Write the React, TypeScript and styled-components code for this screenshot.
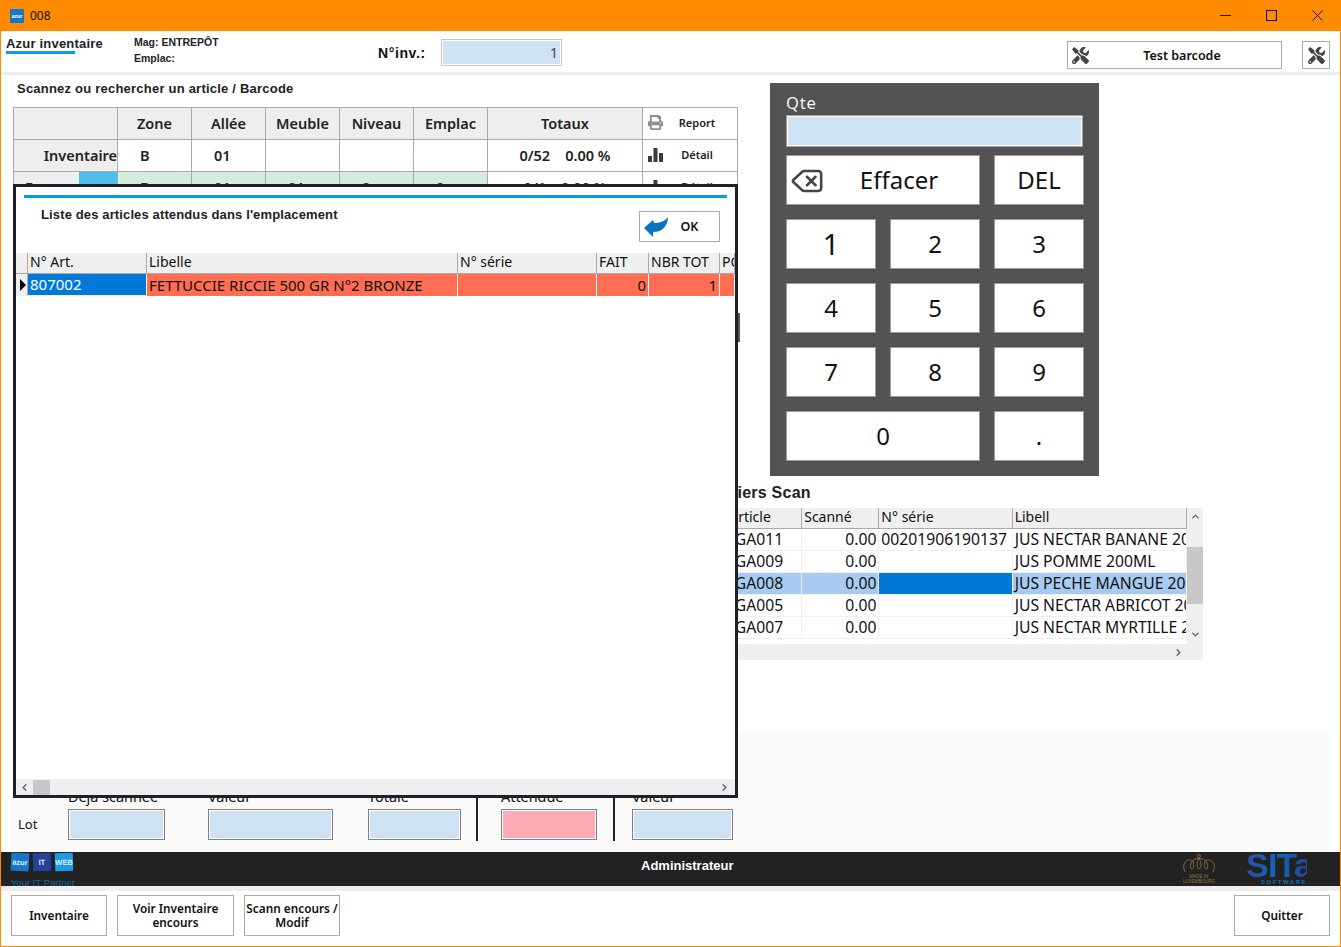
import styled, { createGlobalStyle } from 'styled-components'
import { ChevronDown, ChevronLeft, ChevronRight, ChevronUp, Delete } from 'lucide-react'
import { FaPrint, FaTools } from 'react-icons/fa'

const UI_FONT = `"Noto Sans", "Open Sans", sans-serif`
const LABEL_FONT = `"Liberation Sans", Arial, sans-serif`

const GlobalStyle = createGlobalStyle`
    html, body {
        margin: 0;
        padding: 0;
        background: #fff;
    }
    * {
        box-sizing: border-box;
    }
`

const Window = styled.div`
    width: 1341px;
    height: 947px;
    display: flex;
    flex-direction: column;
    border: 1px solid #ff8c00;
    border-top: none;
    background: #fff;
    overflow: hidden;
    font-family: ${UI_FONT};
    color: #111;
`

const TitleBar = styled.div`
    height: 31px;
    flex: none;
    margin: 0 -1px;
    padding-left: 10px;
    display: flex;
    align-items: center;
    gap: 6px;
    background: #ff8c00;
    font-size: 12px;
`

const AppIcon = styled.div`
    width: 14px;
    height: 14px;
    background: #1677c9;
    color: #fff;
    font-size: 5px;
    font-weight: 700;
    display: flex;
    align-items: center;
    justify-content: center;
`

const WindowControls = styled.div`
    margin: 0 1px 0 auto;
    display: flex;
`

const WindowControl = styled.div`
    width: 46px;
    height: 31px;
    display: flex;
    align-items: center;
    justify-content: center;
`

const Header = styled.div`
    height: 44px;
    flex: none;
    border-bottom: 3px solid #eee;
    display: flex;
    align-items: flex-start;
`

const Brand = styled.div`
    margin: 6px 0 0 5px;
    width: 128px;
    font-family: ${LABEL_FONT};
    font-size: 13px;
    font-weight: 700;
    line-height: 14px;
    color: #222;
    letter-spacing: 0.2px;

    &::after {
        content: '';
        display: block;
        width: 69px;
        height: 3px;
        background: #0a9be4;
    }
`

const Location = styled.div`
    margin-top: 3px;
    width: 244px;
    font-family: ${LABEL_FONT};
    font-size: 10.5px;
    line-height: 16px;
    font-weight: 700;
    color: #222;
`

const InvLabel = styled.div`
    margin-top: 13px;
    width: 63px;
    font-family: ${LABEL_FONT};
    font-size: 14px;
    line-height: 18px;
    font-weight: 700;
    letter-spacing: 0.6px;
`

const InvInput = styled.div`
    margin-top: 8px;
    width: 121px;
    height: 27px;
    padding-right: 3px;
    display: flex;
    align-items: center;
    justify-content: flex-end;
    background: #cfe2f3;
    border: 1px solid #c8c8c8;
    box-shadow: inset 0 0 0 1px #fff;
    font-size: 14px;
    color: #444;
`

const TestButton = styled.div`
    margin: 10px 0 0 505px;
    width: 215px;
    height: 28px;
    padding: 0 4px;
    display: flex;
    align-items: center;
    border: 1px solid #aaa;
    font-size: 12.5px;
    font-weight: 600;
`

const TestLabel = styled.span`
    flex: 1;
    text-align: center;
    padding-right: 2px;
`

const ToolButton = styled.div`
    margin: 10px 0 0 20px;
    width: 28px;
    height: 28px;
    display: flex;
    align-items: center;
    justify-content: center;
    border: 1px solid #aaa;
`

const Body = styled.div`
    position: relative;
    height: 777px;
    flex: none;
    display: flex;
    flex-direction: column;
`

const Upper = styled.div`
    height: 656px;
    flex: none;
    display: flex;
`

const LeftColumn = styled.div`
    width: 737px;
    flex: none;
    padding: 6px 0 0 12px;
`

const PageTitle = styled.div`
    height: 26px;
    padding: 0 0 0 4px;
    font-family: ${LABEL_FONT};
    font-size: 13px;
    line-height: 16px;
    font-weight: 700;
    color: #222;
    letter-spacing: 0.22px;
`

const SummaryTable = styled.table`
    width: 724px;
    border-collapse: collapse;
    table-layout: fixed;
    font-size: 14.5px;
    font-weight: 600;
    color: #222;

    td {
        height: 32px;
        padding: 0 0 2px;
        border: 1px solid #aaa;
        white-space: nowrap;
        overflow: hidden;
    }
`

const HeadCell = styled.td`
    background: #eee;
    text-align: center;
`

const RowLabel = styled.td`
    background: #eee;
    text-align: right;
`

const SplitCell = styled.td`
    background: #eee;
    padding: 0 !important;
`

const SplitLabel = styled.div`
    height: 31px;
    padding-bottom: 0;
    display: flex;
    align-items: center;
    background: #eee;
`

const SplitText = styled.span`
    width: 65px;
    padding: 0 0 2px 11px;
    overflow: hidden;
`

const Swatch = styled.span`
    flex: 1;
    align-self: stretch;
    background: #4fbde9;
`

const ValueCell = styled.td<{ $done?: boolean }>`
    padding-left: 22px !important;
    background: ${(p) => (p.$done ? '#d5ebdd' : '#fff')};
`

const TotalCell = styled.td`
    text-align: center;
`

const ActionCell = styled.td`
    font-size: 11px;
`

const ActionInner = styled.div`
    padding: 0 0 0 5px;
    display: flex;
    align-items: center;
`

const ActionText = styled.span`
    flex: 1;
    text-align: center;
    padding-right: 6px;
`

const RightColumn = styled.div`
    flex: 1;
    padding: 8px 0 0 32px;
`

const Keypad = styled.div`
    width: 329px;
    height: 393px;
    padding: 9px 15px 0 16px;
    background: #535353;
`

const KeypadLabel = styled.div`
    height: 23px;
    font-size: 16.5px;
    line-height: 22px;
    letter-spacing: 0.8px;
    color: #f4f4f4;
`

const KeypadInput = styled.div`
    height: 32px;
    margin: 0 1px 8px 0;
    background: #cfe2f3;
    border: 1px solid #a0a0a0;
    box-shadow: inset 0 0 0 1px #fff;
`

const KeypadGrid = styled.div`
    display: grid;
    grid-template-columns: repeat(3, 90px);
    grid-auto-rows: 50px;
    gap: 14px;
`

const Key = styled.div<{ $wide?: boolean; $big?: boolean; $offset?: number }>`
    position: relative;
    grid-column: ${(p) => (p.$wide ? 'span 2' : 'auto')};
    padding: 0 0 2px ${(p) => p.$offset || 0}px;
    display: flex;
    align-items: center;
    justify-content: center;
    background: #fff;
    border: 1px solid #9a9a9a;
    font-size: ${(p) => (p.$big ? '29px' : '24px')};
    color: #111;
`

const KeyIcon = styled.span`
    position: absolute;
    left: 3px;
    top: 8px;
    display: flex;
    color: #444;
`

const ScanSection = styled.div`
    width: 503px;
    margin: 7px 0 0 -70px;
`

const ScanTitle = styled.div`
    height: 25px;
    font-family: ${LABEL_FONT};
    font-size: 16px;
    line-height: 19px;
    font-weight: 700;
    color: #222;
    letter-spacing: 0.25px;
`

const DataTable = styled.table`
    align-self: start;
    border-collapse: separate;
    border-spacing: 0;
    table-layout: fixed;
    width: 100%;
    font-size: 15px;

    th {
        height: 21px;
        padding: 0 2px 2px;
        text-align: left;
        font-weight: 400;
        font-size: 14px;
        line-height: 18px;
        background: #efefef;
        border-right: 1px solid #aaa;
        border-bottom: 1px solid #aaa;
        white-space: nowrap;
        overflow: hidden;
    }

    td {
        height: 22px;
        padding: 0 2px 1px;
        line-height: 20px;
        border-right: 1px solid #f0f0f0;
        border-bottom: 1px solid #f0f0f0;
        white-space: nowrap;
        overflow: hidden;
    }
`

const ScanFrame = styled.div`
    height: 152px;
    display: grid;
    grid-template-columns: 1fr 16px;
    grid-template-rows: 136px 16px;
    background: #fff;

    && td {
        font-size: 15.7px;
    }
`

const ArticleHead = styled.th`
    padding-left: 10px !important;
`

const CodeCell = styled.td<{ $selected?: boolean }>`
    padding-right: 18px !important;
    text-align: right;
    background: ${(p) => (p.$selected ? '#a6caf0' : 'transparent')};
`

const NumberCell = styled.td`
    text-align: right;
`

const SelectedCell = styled.td<{ $align?: string }>`
    background: #a6caf0;
    text-align: ${(p) => p.$align || 'left'};
`

const CurrentCell = styled.td`
    background: #0078d7;
    color: #fff;
`

const DangerCell = styled.td<{ $align?: string }>`
    background: #ff6e52;
    border-right-color: #fff !important;
    border-bottom: none !important;
    text-align: ${(p) => p.$align || 'left'};
`

const RowHeaderCell = styled.td`
    background: #f0f0f0;
    padding: 0 !important;
    border-right: 1px solid #aaa !important;
`

const RowPointer = styled.div`
    width: 0;
    height: 0;
    margin-left: 4px;
    border-left: 6px solid #000;
    border-top: 6px solid transparent;
    border-bottom: 6px solid transparent;
`

const VerticalScroll = styled.div`
    position: relative;
    background: #efefef;
    display: flex;
    flex-direction: column;
    align-items: center;
    justify-content: space-between;
    padding: 3px 0 4px;
    color: #606060;
`

const ScrollThumbV = styled.div`
    position: absolute;
    left: 0;
    right: 0;
    top: 39px;
    height: 57px;
    background: #c8c8c8;
`

const HorizontalScroll = styled.div<{ $span?: boolean }>`
    height: 16px;
    flex: none;
    grid-column: ${(p) => (p.$span ? '1 / span 2' : 'auto')};
    display: flex;
    align-items: center;
    justify-content: space-between;
    padding: 0 5px 0 3px;
    background: #efefef;
    color: #606060;
`

const ScrollThumbH = styled.div`
    width: 17px;
    height: 15px;
    margin: 0 auto 0 3px;
    background: #c8c8c8;
`

const ScrollEndArrow = styled.span`
    display: flex;
    margin: 0 14px 0 auto;
`

const StatsPanel = styled.div`
    height: 121px;
    flex: none;
    margin: 0 11px;
    padding: 0 0 12px 6px;
    display: flex;
    align-items: flex-end;
    background: #fafafa;
`

const LotLabel = styled.div`
    width: 50px;
    height: 31px;
    padding-bottom: 2px;
    display: flex;
    align-items: center;
    font-size: 13px;
`

const LotField = styled.div<{ $width: number; $gap: number }>`
    width: ${(p) => p.$width}px;
    margin-left: ${(p) => p.$gap}px;
    flex: none;
`

const LotCaption = styled.div`
    height: 20px;
    font-size: 14.4px;
    line-height: 16px;
    white-space: nowrap;
`

const LotInput = styled.div<{ $alert?: boolean }>`
    height: 31px;
    background: ${(p) => (p.$alert ? '#ffabb5' : '#cfe2f3')};
    border: 1px solid #808080;
    box-shadow: inset 0 0 0 1px #fff;
`

const LotDivider = styled.div<{ $gap: number }>`
    width: 2px;
    height: 50px;
    margin: 0 0 -1px ${(p) => p.$gap}px;
    flex: none;
    background: #222;
`

const Modal = styled.div`
    position: absolute;
    left: 12px;
    top: 109px;
    width: 725px;
    height: 614px;
    z-index: 5;
    display: flex;
    flex-direction: column;
    background: #fff;
    border: 3px solid #20202a;

    &::after {
        content: '';
        position: absolute;
        right: -5px;
        top: 126px;
        width: 2px;
        height: 29px;
        background: #555;
    }
`

const ModalRule = styled.div`
    height: 3px;
    flex: none;
    margin: 8px 8px 0;
    background: #009fe3;
`

const ModalHeader = styled.div`
    height: 31px;
    flex: none;
    margin-top: 13px;
    padding: 0 15px 0 25px;
    display: flex;
    justify-content: space-between;
`

const ModalTitle = styled.div`
    font-family: ${LABEL_FONT};
    font-size: 13px;
    line-height: 8px;
    font-weight: 700;
    color: #222;
    letter-spacing: 0.13px;
`

const OkButton = styled.div`
    width: 81px;
    height: 31px;
    padding-left: 4px;
    display: flex;
    align-items: center;
    border: 1px solid #aaa;
    font-size: 12.5px;
    font-weight: 600;
`

const OkLabel = styled.span`
    flex: 1;
    text-align: center;
    padding-right: 8px;
`

const ModalGrid = styled.div`
    flex: 1;
    margin-top: 11px;
    overflow: hidden;

    && td {
        height: 21px;
    }
`

const StatusBand = styled.div`
    height: 34px;
    flex: none;
    display: grid;
    grid-template-columns: 640px auto 1fr;
    background: #222;
    overflow: hidden;
`

const LogoBlock = styled.div`
    padding: 1px 0 0 10px;
`

const LogoRow = styled.div`
    display: flex;
    gap: 4px;
`

const LogoTile = styled.div<{ $color: string; $tilt: number }>`
    width: 18px;
    height: 18px;
    display: flex;
    align-items: center;
    justify-content: center;
    background: ${(p) => p.$color};
    transform: rotate(${(p) => p.$tilt}deg);
    font-family: ${LABEL_FONT};
    font-size: 7.5px;
    font-weight: 700;
    color: #dfeffa;
`

const LogoTagline = styled.div`
    margin-top: 7px;
    font-family: ${LABEL_FONT};
    font-size: 9.5px;
    line-height: 10px;
    color: #0d6a9f;
    white-space: nowrap;
`

const UserName = styled.div`
    padding-top: 6px;
    font-family: ${LABEL_FONT};
    font-size: 13px;
    line-height: 16px;
    font-weight: 700;
    color: #fff;
`

const Marks = styled.div`
    display: flex;
    justify-content: flex-end;
    padding-right: 33px;
    gap: 30px;
`

const Crown = styled.div`
    width: 34px;
    padding-top: 2px;
    color: #97793a;
    font-family: ${LABEL_FONT};
    font-size: 4.5px;
    line-height: 5px;
    text-align: center;
    white-space: nowrap;
`

const SitaMark = styled.div`
    width: 61px;
    font-family: ${LABEL_FONT};
    text-align: right;
`

const SitaWord = styled.div`
    height: 27px;
    font-size: 34px;
    line-height: 27px;
    font-weight: 700;
    letter-spacing: -0.8px;
    background: linear-gradient(90deg, #2a4fa5 0%, #1167b8 50%, #24479a 100%);
    -webkit-background-clip: text;
    background-clip: text;
    color: transparent;
`

const SitaSub = styled.div`
    font-size: 6px;
    line-height: 7px;
    font-weight: 700;
    letter-spacing: 1.5px;
    color: #0b6fb5;
`

const GrayStrip = styled.div`
    height: 5px;
    flex: none;
    background: #eee;
`

const ActionBar = styled.div`
    flex: 1;
    padding: 4px 10px 0;
    display: flex;
    gap: 10px;
`

const BarButton = styled.div<{ $width: number; $pushRight?: boolean }>`
    width: ${(p) => p.$width}px;
    height: 41px;
    margin-left: ${(p) => (p.$pushRight ? 'auto' : '0')};
    padding-bottom: 2px;
    display: flex;
    align-items: center;
    justify-content: center;
    text-align: center;
    border: 1px solid #aaa;
    font-size: 11.8px;
    font-weight: 600;
    line-height: 14px;
`

const BarChartIcon = () => (
    <svg width="15" height="14" viewBox="0 0 15 14" fill="#3d3d3d">
        <rect x="0" y="8" width="4" height="6" />
        <rect x="5.5" y="0" width="4" height="14" />
        <rect x="11" y="5" width="4" height="9" />
    </svg>
)

const BackArrow = () => (
    <svg width="24" height="20" viewBox="0 0 24 20">
        <path d="M0 11 L9 3 L10 6 C16 6 21 4 24 0 C24 7 20 13 14 14.500 L9 15 L9 20 Z" fill="#0b74bf" />
    </svg>
)

const CrownIcon = () => (
    <svg width="34" height="19" viewBox="0 0 34 19" fill="none" stroke="#97793a" strokeWidth="0.800">
        <circle cx="17" cy="2" r="1.500" />
        <path d="M3 18 C-1 9 5 5 9 6 C13 7 12 15 10 15 C7 15 8 7 13 5 C15 4.300 19 4.300 21 5 C26 7 27 15 24 15 C22 15 21 7 25 6 C29 5 35 9 31 18" />
        <path d="M17 4.500 C14 8 15 15 17 15 C19 15 20 8 17 4.500 Z" />
    </svg>
)

const TOP_COLUMNS = [104, 74, 74, 74, 74, 74, 155, 95]
const SCAN_COLUMNS = [102, 77, 133, 174]
const MODAL_COLUMNS = [12, 119, 311, 139, 52, 71, 15]

const SCAN_ROWS = [
    { code: 'GA011', qty: '0.00', serial: '00201906190137', label: 'JUS NECTAR BANANE 200ML' },
    { code: 'GA009', qty: '0.00', serial: '', label: 'JUS POMME 200ML' },
    { code: 'GA008', qty: '0.00', serial: '', label: 'JUS PECHE MANGUE 200ML', selected: true },
    { code: 'GA005', qty: '0.00', serial: '', label: 'JUS NECTAR ABRICOT 200ML' },
    { code: 'GA007', qty: '0.00', serial: '', label: 'JUS NECTAR MYRTILLE 200ML' },
]

const ColGroup = ({ widths }: { widths: number[] }) => (
    <colgroup>
        {widths.map((w, i) => (
            <col key={i} width={w} />
        ))}
    </colgroup>
)

export default function App() {
    return (
        <>
            <GlobalStyle />
            <Window>
                <TitleBar>
                    <AppIcon>azur</AppIcon>
                    008
                    <WindowControls>
                        <WindowControl>
                            <svg width="11" height="11" viewBox="0 0 11 11">
                                <path d="M0 5.500H11" stroke="#111" />
                            </svg>
                        </WindowControl>
                        <WindowControl>
                            <svg width="11" height="11" viewBox="0 0 11 11">
                                <rect x="0.500" y="0.500" width="10" height="10" fill="none" stroke="#111" />
                            </svg>
                        </WindowControl>
                        <WindowControl>
                            <svg width="11" height="11" viewBox="0 0 11 11">
                                <path d="M0.500 0.500L10.500 10.500M10.500 0.500L0.500 10.500" stroke="#111" />
                            </svg>
                        </WindowControl>
                    </WindowControls>
                </TitleBar>

                <Header>
                    <Brand>Azur inventaire</Brand>
                    <Location>
                        Mag: ENTREPÔT
                        <br />
                        Emplac:
                    </Location>
                    <InvLabel>N°inv.:</InvLabel>
                    <InvInput>1</InvInput>
                    <TestButton>
                        <FaTools size={17} color="#444" />
                        <TestLabel>Test barcode</TestLabel>
                    </TestButton>
                    <ToolButton>
                        <FaTools size={17} color="#444" />
                    </ToolButton>
                </Header>

                <Body>
                    <Upper>
                        <LeftColumn>
                            <PageTitle>Scannez ou rechercher un article / Barcode</PageTitle>
                            <SummaryTable>
                                <ColGroup widths={TOP_COLUMNS} />
                                <tbody>
                                    <tr>
                                        <HeadCell />
                                        <HeadCell>Zone</HeadCell>
                                        <HeadCell>Allée</HeadCell>
                                        <HeadCell>Meuble</HeadCell>
                                        <HeadCell>Niveau</HeadCell>
                                        <HeadCell>Emplac</HeadCell>
                                        <HeadCell>Totaux</HeadCell>
                                        <ActionCell>
                                            <ActionInner>
                                                <FaPrint size={15} color="#8a8f96" />
                                                <ActionText>Report</ActionText>
                                            </ActionInner>
                                        </ActionCell>
                                    </tr>
                                    <tr>
                                        <RowLabel>Inventaire</RowLabel>
                                        <ValueCell>B</ValueCell>
                                        <ValueCell>01</ValueCell>
                                        <ValueCell />
                                        <ValueCell />
                                        <ValueCell />
                                        <TotalCell>0/52&nbsp;&nbsp;&nbsp;&nbsp;0.00 %</TotalCell>
                                        <ActionCell>
                                            <ActionInner>
                                                <BarChartIcon />
                                                <ActionText>Détail</ActionText>
                                            </ActionInner>
                                        </ActionCell>
                                    </tr>
                                    <tr>
                                        <SplitCell>
                                            <SplitLabel>
                                                <SplitText>En cours</SplitText>
                                                <Swatch />
                                            </SplitLabel>
                                        </SplitCell>
                                        <ValueCell $done>B</ValueCell>
                                        <ValueCell $done>01</ValueCell>
                                        <ValueCell $done>01</ValueCell>
                                        <ValueCell $done>0</ValueCell>
                                        <ValueCell $done>0</ValueCell>
                                        <TotalCell>0/1&nbsp;&nbsp;&nbsp;&nbsp;0.00 %</TotalCell>
                                        <ActionCell>
                                            <ActionInner>
                                                <BarChartIcon />
                                                <ActionText>Détail</ActionText>
                                            </ActionInner>
                                        </ActionCell>
                                    </tr>
                                </tbody>
                            </SummaryTable>
                        </LeftColumn>

                        <RightColumn>
                            <Keypad>
                                <KeypadLabel>Qte</KeypadLabel>
                                <KeypadInput />
                                <KeypadGrid>
                                    <Key $wide $offset={32}>
                                        <KeyIcon>
                                            <Delete size={34} strokeWidth={1.800} />
                                        </KeyIcon>
                                        Effacer
                                    </Key>
                                    <Key>DEL</Key>
                                    <Key $big>1</Key>
                                    <Key>2</Key>
                                    <Key>3</Key>
                                    <Key>4</Key>
                                    <Key>5</Key>
                                    <Key>6</Key>
                                    <Key>7</Key>
                                    <Key>8</Key>
                                    <Key>9</Key>
                                    <Key $wide>0</Key>
                                    <Key>.</Key>
                                </KeypadGrid>
                            </Keypad>

                            <ScanSection>
                                <ScanTitle>Derniers Scan</ScanTitle>
                                <ScanFrame>
                                    <DataTable>
                                        <ColGroup widths={SCAN_COLUMNS} />
                                        <thead>
                                            <tr>
                                                <ArticleHead>N° article</ArticleHead>
                                                <th>Scanné</th>
                                                <th>N° série</th>
                                                <th>Libell</th>
                                            </tr>
                                        </thead>
                                        <tbody>
                                            {SCAN_ROWS.map((row) =>
                                                row.selected ? (
                                                    <tr key={row.code}>
                                                        <CodeCell $selected>{row.code}</CodeCell>
                                                        <SelectedCell $align="right">{row.qty}</SelectedCell>
                                                        <CurrentCell>{row.serial}</CurrentCell>
                                                        <SelectedCell>{row.label}</SelectedCell>
                                                    </tr>
                                                ) : (
                                                    <tr key={row.code}>
                                                        <CodeCell>{row.code}</CodeCell>
                                                        <NumberCell>{row.qty}</NumberCell>
                                                        <td>{row.serial}</td>
                                                        <td>{row.label}</td>
                                                    </tr>
                                                ),
                                            )}
                                        </tbody>
                                    </DataTable>
                                    <VerticalScroll>
                                        <ChevronUp size={11} strokeWidth={3} />
                                        <ScrollThumbV />
                                        <ChevronDown size={11} strokeWidth={3} />
                                    </VerticalScroll>
                                    <HorizontalScroll $span>
                                        <ScrollEndArrow>
                                            <ChevronRight size={11} strokeWidth={3} />
                                        </ScrollEndArrow>
                                    </HorizontalScroll>
                                </ScanFrame>
                            </ScanSection>
                        </RightColumn>
                    </Upper>

                    <StatsPanel>
                        <LotLabel>Lot</LotLabel>
                        <LotField $width={97} $gap={0}>
                            <LotCaption>Déjà scannée</LotCaption>
                            <LotInput />
                        </LotField>
                        <LotField $width={125} $gap={43}>
                            <LotCaption>Valeur</LotCaption>
                            <LotInput />
                        </LotField>
                        <LotField $width={93} $gap={35}>
                            <LotCaption>Totale</LotCaption>
                            <LotInput />
                        </LotField>
                        <LotDivider $gap={15} />
                        <LotField $width={96} $gap={23}>
                            <LotCaption>Attendue</LotCaption>
                            <LotInput $alert />
                        </LotField>
                        <LotDivider $gap={16} />
                        <LotField $width={101} $gap={17}>
                            <LotCaption>Valeur</LotCaption>
                            <LotInput />
                        </LotField>
                    </StatsPanel>

                    <Modal>
                        <ModalRule />
                        <ModalHeader>
                            <ModalTitle>Liste des articles attendus dans l'emplacement</ModalTitle>
                            <OkButton>
                                <BackArrow />
                                <OkLabel>OK</OkLabel>
                            </OkButton>
                        </ModalHeader>
                        <ModalGrid>
                            <DataTable>
                                <ColGroup widths={MODAL_COLUMNS} />
                                <thead>
                                    <tr>
                                        <th />
                                        <th>N° Art.</th>
                                        <th>Libelle</th>
                                        <th>N° série</th>
                                        <th>FAIT</th>
                                        <th>NBR TOT</th>
                                        <th>POIDS</th>
                                    </tr>
                                </thead>
                                <tbody>
                                    <tr>
                                        <RowHeaderCell>
                                            <RowPointer />
                                        </RowHeaderCell>
                                        <CurrentCell>807002</CurrentCell>
                                        <DangerCell>FETTUCCIE RICCIE 500 GR N°2 BRONZE</DangerCell>
                                        <DangerCell />
                                        <DangerCell $align="right">0</DangerCell>
                                        <DangerCell $align="right">1</DangerCell>
                                        <DangerCell />
                                    </tr>
                                </tbody>
                            </DataTable>
                        </ModalGrid>
                        <HorizontalScroll>
                            <ChevronLeft size={11} strokeWidth={3} />
                            <ScrollThumbH />
                            <ChevronRight size={11} strokeWidth={3} />
                        </HorizontalScroll>
                    </Modal>
                </Body>

                <StatusBand>
                    <LogoBlock>
                        <LogoRow>
                            <LogoTile $color="#1677c9" $tilt={3}>azur</LogoTile>
                            <LogoTile $color="#25429a" $tilt={-2}>IT</LogoTile>
                            <LogoTile $color="#1b9be6" $tilt={-2}>WEB</LogoTile>
                        </LogoRow>
                        <LogoTagline>Your IT Partner</LogoTagline>
                    </LogoBlock>
                    <UserName>Administrateur</UserName>
                    <Marks>
                        <Crown>
                            <CrownIcon />
                            <div>
                                MADE IN
                                <br />
                                LUXEMBOURG
                            </div>
                        </Crown>
                        <SitaMark>
                            <SitaWord>SITa</SitaWord>
                            <SitaSub>SOFTWARE</SitaSub>
                        </SitaMark>
                    </Marks>
                </StatusBand>
                <GrayStrip />
                <ActionBar>
                    <BarButton $width={96}>Inventaire</BarButton>
                    <BarButton $width={117}>
                        Voir Inventaire
                        <br />
                        encours
                    </BarButton>
                    <BarButton $width={96}>
                        Scann encours /
                        <br />
                        Modif
                    </BarButton>
                    <BarButton $width={96} $pushRight>
                        Quitter
                    </BarButton>
                </ActionBar>
            </Window>
        </>
    )
}
